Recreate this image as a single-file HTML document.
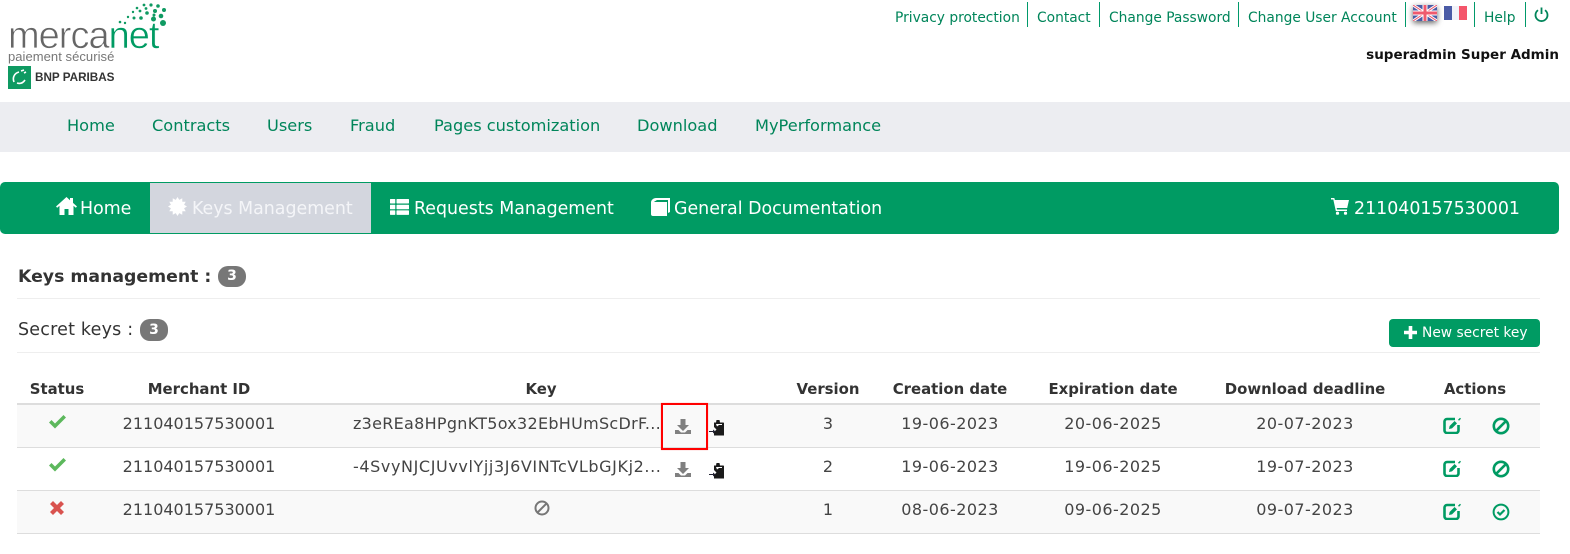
<!DOCTYPE html>
<html><head><meta charset="utf-8"><title>Mercanet</title>
<style>
html,body{margin:0;padding:0;background:#fff}
body{width:1570px;height:554px;position:relative;overflow:hidden;font-family:"DejaVu Sans","Liberation Sans",sans-serif;font-size:14px;color:#333}
.a{position:absolute;white-space:nowrap;line-height:18px}
.c{transform:translateX(-50%)}
.g{color:#00855a;font-size:13.8px}
.bar{position:absolute;width:1px;background:#00996a;top:2px;height:25px}
.nav{top:117px;font-size:16.2px;color:#00855a}
.tab{top:199px;font-size:17.4px;color:#fff;line-height:20px}
.hr{position:absolute;left:17px;width:1523px;height:1px;background:#eee}
.th{top:380px;font-weight:bold;font-size:14.9px;color:#333}
.td{font-size:16px;color:#444}
.d{letter-spacing:.45px}
.badge{position:absolute;background:#777;color:#fff;border-radius:10px;font-weight:bold;font-size:14px;text-align:center;width:28px;height:21px;line-height:21px}
svg{position:absolute;display:block}
</style></head><body>

<!-- logo -->
<div class="a" style="left:8px;top:16px;font:38px/40px 'Liberation Sans',sans-serif;letter-spacing:-1px;color:#666;-webkit-text-stroke:.7px #fff">merca<span style="color:#009b63;-webkit-text-stroke:.5px #fff">net</span></div>
<div class="a" style="left:8px;top:50px;font:13px/14px 'Liberation Sans',sans-serif;color:#777;letter-spacing:.05px">paiement sécurisé</div>
<div class="a" style="left:35px;top:71px;font:bold 11.7px/14px 'Liberation Sans',sans-serif;color:#333">BNP PARIBAS</div>
<svg style="left:8px;top:66px" width="23" height="23" viewBox="0 0 23 23"><rect width="23" height="23" fill="#0f9a62"/><path d="M6 16C4 11 7 7 11 6M9 17c3 1 6 0 8-3M13 5l3-1M16 7l2-1" stroke="#fff" stroke-width="1.600" fill="none"/></svg>
<svg style="left:115px;top:0" width="56" height="30" viewBox="0 0 56 30" fill="#0f9a62">
<circle cx="48" cy="23" r="3"/><circle cx="38.500" cy="19" r="2.500"/><circle cx="46" cy="16" r="2.300"/><circle cx="49" cy="10" r="2"/><circle cx="40" cy="11" r="2"/><circle cx="32" cy="13" r="1.800"/><circle cx="26" cy="18" r="1.800"/><circle cx="19" cy="18" r="1.500"/><circle cx="10" cy="23" r="1.200"/><circle cx="5" cy="22" r="1.300"/><circle cx="43" cy="6" r="1.800"/><circle cx="36" cy="5" r="1.600"/><circle cx="29" cy="5" r="1.400"/><circle cx="22" cy="8" r="1.300"/><circle cx="18" cy="12" r="1.200"/><circle cx="25" cy="11" r="1.400"/><circle cx="13" cy="17" r="1.200"/><circle cx="31" cy="8.500" r="1.400"/><circle cx="39" cy="15" r="1.500"/>
</svg>

<!-- top links -->
<div class="a g" style="left:895px;top:9px">Privacy protection</div><div class="bar" style="left:1027px"></div>
<div class="a g" style="left:1037px;top:9px">Contact</div><div class="bar" style="left:1099px"></div>
<div class="a g" style="left:1109px;top:9px">Change Password</div><div class="bar" style="left:1238px"></div>
<div class="a g" style="left:1248px;top:9px">Change User Account</div><div class="bar" style="left:1405px"></div>
<svg style="left:1413px;top:5px;filter:drop-shadow(0 2px 3px rgba(0,0,0,.6))" width="24" height="16" viewBox="0 0 24 16"><rect width="24" height="16" fill="#4a5ba6"/><path d="M0 0L24 16M24 0L0 16" stroke="#fff" stroke-width="3"/><path d="M0 0L24 16M24 0L0 16" stroke="#ef5a6e" stroke-width="1"/><path d="M12 0V16M0 8H24" stroke="#fff" stroke-width="5"/><path d="M12 0V16M0 8H24" stroke="#ef5a6e" stroke-width="3"/></svg>
<svg style="left:1444px;top:6px" width="23" height="14" viewBox="0 0 23 14"><rect width="8" height="14" fill="#4a5ba6"/><rect x="8" width="7" height="14" fill="#f1f3f9"/><rect x="15" width="8" height="14" fill="#f4566b"/></svg>
<div class="bar" style="left:1474px"></div>
<div class="a g" style="left:1484px;top:9px">Help</div><div class="bar" style="left:1525px"></div>
<svg style="left:1534px;top:7px" width="15" height="15" viewBox="0 0 15 15" fill="none" stroke="#00855a" stroke-width="1.800"><path d="M4 3.200a6 6 0 1 0 7 0"/><path d="M7.500 0.500V7"/></svg>
<div class="a" style="right:11px;top:46px;font-weight:bold;font-size:13.5px;color:#111">superadmin Super Admin</div>

<!-- nav -->
<div style="position:absolute;left:0;top:102px;width:1570px;height:50px;background:#ecedf1"></div>
<div class="a nav" style="left:67px">Home</div>
<div class="a nav" style="left:152px">Contracts</div>
<div class="a nav" style="left:267px">Users</div>
<div class="a nav" style="left:350px">Fraud</div>
<div class="a nav" style="left:434px">Pages customization</div>
<div class="a nav" style="left:637px">Download</div>
<div class="a nav" style="left:755px">MyPerformance</div>

<!-- green bar -->
<div style="position:absolute;left:0;top:182px;width:1559px;height:52px;background:#009b63;border-radius:5px"></div>
<div style="position:absolute;left:150px;top:183px;width:221px;height:50px;background:#d3d6de"></div>
<svg style="left:56px;top:197px" width="21" height="18" viewBox="0 0 21 18" fill="#fff"><path d="M10.500 0L0 9.500l1.200 1.300L3.500 8.800V18h5v-6h4v6h5V8.800l2.300 2L21 9.500 17 5.900V1h-3v2.200z"/></svg>
<div class="a tab" style="left:80px">Home</div>
<svg style="left:168px;top:197px" width="19" height="19" viewBox="0 0 19 19" fill="#fff"><path d="M19 9.500L16.070 11.260 17.730 14.250 14.310 14.310 14.250 17.730 11.260 16.070 9.500 19 7.740 16.070 4.750 17.730 4.690 14.310 1.270 14.250 2.930 11.260 0 9.500 2.930 7.740 1.270 4.750 4.690 4.690 4.750 1.270 7.740 2.930 9.500 0 11.260 2.930 14.250 1.270 14.310 4.690 17.730 4.750 16.070 7.740z"/></svg>
<div class="a tab" style="left:192px;color:#f4f5f8">Keys Management</div>
<svg style="left:390px;top:199px" width="19" height="16" viewBox="0 0 19 16" fill="#fff"><rect width="5.300" height="4.500" rx=".6"/><rect x="6.500" width="12.500" height="4.500" rx=".6"/><rect y="5.700" width="5.300" height="4.500" rx=".6"/><rect x="6.500" y="5.700" width="12.500" height="4.500" rx=".6"/><rect y="11.400" width="5.300" height="4.500" rx=".6"/><rect x="6.500" y="11.400" width="12.500" height="4.500" rx=".6"/></svg>
<div class="a tab" style="left:414px">Requests Management</div>
<svg style="left:651px;top:198px" width="19" height="18" viewBox="0 0 19 18" fill="#fff"><path d="M5 0h14v14l-2 1V2H6L3.500 3.500 3 4h13v14H2a2 2 0 0 1-2-2V4.500C0 2 2.500 0 5 0z"/></svg>
<div class="a tab" style="left:674px">General Documentation</div>
<svg style="left:1331px;top:198px" width="18" height="17" viewBox="0 0 18 17" fill="#fff"><path d="M0 0h3.300l.6 2H18l-1.800 8H5.700l.3 1.500h10v1.500H4.800L2.300 1.500H0z"/><circle cx="6.500" cy="15.200" r="1.600"/><circle cx="14.500" cy="15.200" r="1.600"/></svg>
<div class="a tab" style="left:1354px">211040157530001</div>

<!-- headings -->
<div class="a" style="left:18px;top:267px;font-weight:bold;font-size:17.3px;line-height:20px;color:#333">Keys management :</div>
<div class="badge" style="left:218px;top:266px">3</div>
<div class="hr" style="top:298px"></div>
<div class="a" style="left:18px;top:320px;font-size:17.5px;letter-spacing:.2px;line-height:20px;color:#333">Secret keys :</div>
<div class="badge" style="left:140px;top:319px;height:22px;line-height:22px">3</div>
<div class="hr" style="top:352px"></div>
<div style="position:absolute;left:1389px;top:319px;width:151px;height:28px;background:#009b63;border-radius:4px"></div>
<svg style="left:1404px;top:326px" width="13" height="13" viewBox="0 0 13 13" fill="#fff"><path d="M4.700 0h3.600v4.700H13v3.600H8.300V13H4.700V8.300H0V4.700h4.700z"/></svg>
<div class="a" style="left:1422px;top:324px;font-size:13.800px;color:#fff">New secret key</div>

<!-- table -->
<div style="position:absolute;left:17px;top:405px;width:1523px;height:42px;background:#f9f9f9"></div>
<div style="position:absolute;left:17px;top:491px;width:1523px;height:42px;background:#f9f9f9"></div>
<div style="position:absolute;left:17px;top:403px;width:1523px;height:2px;background:#ddd"></div>
<div style="position:absolute;left:17px;top:447px;width:1523px;height:1px;background:#ddd"></div>
<div style="position:absolute;left:17px;top:490px;width:1523px;height:1px;background:#ddd"></div>
<div style="position:absolute;left:17px;top:533px;width:1523px;height:1px;background:#ddd"></div>

<div class="a c th" style="left:57px">Status</div>
<div class="a c th" style="left:199px">Merchant ID</div>
<div class="a c th" style="left:541px">Key</div>
<div class="a c th" style="left:828px">Version</div>
<div class="a c th" style="left:950px">Creation date</div>
<div class="a c th" style="left:1113px">Expiration date</div>
<div class="a c th" style="left:1305px">Download deadline</div>
<div class="a c th" style="left:1475px">Actions</div>

<!-- row 1 -->
<svg style="left:49px;top:415px" width="17" height="14" viewBox="0 0 17 14" fill="#5cb85c"><path d="M0 7.500L2.500 5 6 8.500 14.500 0 17 2.500 6 13.500z"/></svg>
<div class="a c td" style="left:199px;top:415px">211040157530001</div>
<div class="a td" style="left:353px;top:415px;letter-spacing:.28px">z3eREa8HPgnKT5ox32EbHUmScDrF...</div>
<div style="position:absolute;left:661px;top:403px;width:43px;height:43px;border:2px solid #f00;box-shadow:0 0 1px #f99"></div>
<div class="a c td" style="left:828px;top:415px">3</div>
<div class="a c td d" style="left:950px;top:415px">19-06-2023</div>
<div class="a c td d" style="left:1113px;top:415px">20-06-2025</div>
<div class="a c td d" style="left:1305px;top:415px">20-07-2023</div>

<!-- row 2 -->
<svg style="left:49px;top:458px" width="17" height="14" viewBox="0 0 17 14" fill="#5cb85c"><path d="M0 7.500L2.500 5 6 8.500 14.500 0 17 2.500 6 13.500z"/></svg>
<div class="a c td" style="left:199px;top:458px">211040157530001</div>
<div class="a td" style="left:353px;top:458px;letter-spacing:.6px">-4SvyNJCJUvvlYjj3J6VINTcVLbGJKj2...</div>
<div class="a c td" style="left:828px;top:458px">2</div>
<div class="a c td d" style="left:950px;top:458px">19-06-2023</div>
<div class="a c td d" style="left:1113px;top:458px">19-06-2025</div>
<div class="a c td d" style="left:1305px;top:458px">19-07-2023</div>

<!-- row 3 -->
<svg style="left:50px;top:501px" width="14" height="14" viewBox="0 0 14 14" fill="#d9534f"><path d="M3 0l4 4 4-4 3 3-4 4 4 4-3 3-4-4-4 4-3-3 4-4-4-4z"/></svg>
<div class="a c td" style="left:199px;top:501px">211040157530001</div>
<svg style="left:534px;top:500px" width="16" height="16" viewBox="0 0 16 16" fill="none" stroke="#777" stroke-width="2"><circle cx="8" cy="8" r="6.500"/><path d="M3.500 12.500l9-9"/></svg>
<div class="a c td" style="left:828px;top:501px">1</div>
<div class="a c td d" style="left:950px;top:501px">08-06-2023</div>
<div class="a c td d" style="left:1113px;top:501px">09-06-2025</div>
<div class="a c td d" style="left:1305px;top:501px">09-07-2023</div>

<!-- download icons -->
<svg style="left:675px;top:419px" width="16" height="15" viewBox="0 0 16 15" fill="#808080"><path d="M5.500 0h5v6H14L8 12 2 6h3.500z"/><path d="M0 11h3.500L6 13.500h4L12.500 11H16v4H0z"/></svg>
<svg style="left:675px;top:462px" width="16" height="15" viewBox="0 0 16 15" fill="#808080"><path d="M5.500 0h5v6H14L8 12 2 6h3.500z"/><path d="M0 11h3.500L6 13.500h4L12.500 11H16v4H0z"/></svg>

<!-- clipboard icons -->
<svg style="left:709px;top:419px" width="16" height="17" viewBox="0 0 16 17"><path d="M5 3.500h2L7.500 1h3l.5 2.500h3.500L15 4v12.500H5V13l2.500-2.500L5 8z" fill="#1a1a1a"/><path d="M7 5h6v1H10L8 7.500z" fill="#fff"/><path d="M0 12.500h5" stroke="#223" stroke-width="1"/><path d="M4 10.500l2.500 2-2.500 2z" fill="#223"/></svg>
<svg style="left:709px;top:462px" width="16" height="17" viewBox="0 0 16 17"><path d="M5 3.500h2L7.500 1h3l.5 2.500h3.500L15 4v12.500H5V13l2.500-2.500L5 8z" fill="#1a1a1a"/><path d="M7 5h6v1H10L8 7.500z" fill="#fff"/><path d="M0 12.500h5" stroke="#223" stroke-width="1"/><path d="M4 10.500l2.500 2-2.500 2z" fill="#223"/></svg>

<!-- action icons -->
<svg style="left:1443px;top:416px" width="19" height="18" viewBox="0 0 19 18" fill="none"><path d="M12 3H4a2.500 2.500 0 0 0-2.500 2.500v9A2.500 2.500 0 0 0 4 17h9a2.500 2.500 0 0 0 2.500-2.500V9" stroke="#009b63" stroke-width="2.600"/><path d="M6 13l.6-3 5-5 2.400 2.400-5 5z" fill="#009b63"/><path d="M15 3.800l2-2 1 1-2 2z" fill="#009b63"/></svg>
<svg style="left:1443px;top:459px" width="19" height="18" viewBox="0 0 19 18" fill="none"><path d="M12 3H4a2.500 2.500 0 0 0-2.500 2.500v9A2.500 2.500 0 0 0 4 17h9a2.500 2.500 0 0 0 2.500-2.500V9" stroke="#009b63" stroke-width="2.600"/><path d="M6 13l.6-3 5-5 2.400 2.400-5 5z" fill="#009b63"/><path d="M15 3.800l2-2 1 1-2 2z" fill="#009b63"/></svg>
<svg style="left:1443px;top:502px" width="19" height="18" viewBox="0 0 19 18" fill="none"><path d="M12 3H4a2.500 2.500 0 0 0-2.500 2.500v9A2.500 2.500 0 0 0 4 17h9a2.500 2.500 0 0 0 2.500-2.500V9" stroke="#009b63" stroke-width="2.600"/><path d="M6 13l.6-3 5-5 2.400 2.400-5 5z" fill="#009b63"/><path d="M15 3.800l2-2 1 1-2 2z" fill="#009b63"/></svg>
<svg style="left:1492px;top:417px" width="18" height="18" viewBox="0 0 18 18" fill="none" stroke="#009b63" stroke-width="2.600"><circle cx="9" cy="9" r="7.200"/><path d="M3.800 14.200L14.200 3.800"/></svg>
<svg style="left:1492px;top:460px" width="18" height="18" viewBox="0 0 18 18" fill="none" stroke="#009b63" stroke-width="2.600"><circle cx="9" cy="9" r="7.200"/><path d="M3.800 14.200L14.200 3.800"/></svg>
<svg style="left:1492px;top:503px" width="18" height="18" viewBox="0 0 18 18" fill="none" stroke="#009b63"><circle cx="9" cy="9" r="7.400" stroke-width="2"/><path d="M5.500 9l2.500 2.500 4.500-4.500" stroke-width="2.200"/></svg>

</body></html>
